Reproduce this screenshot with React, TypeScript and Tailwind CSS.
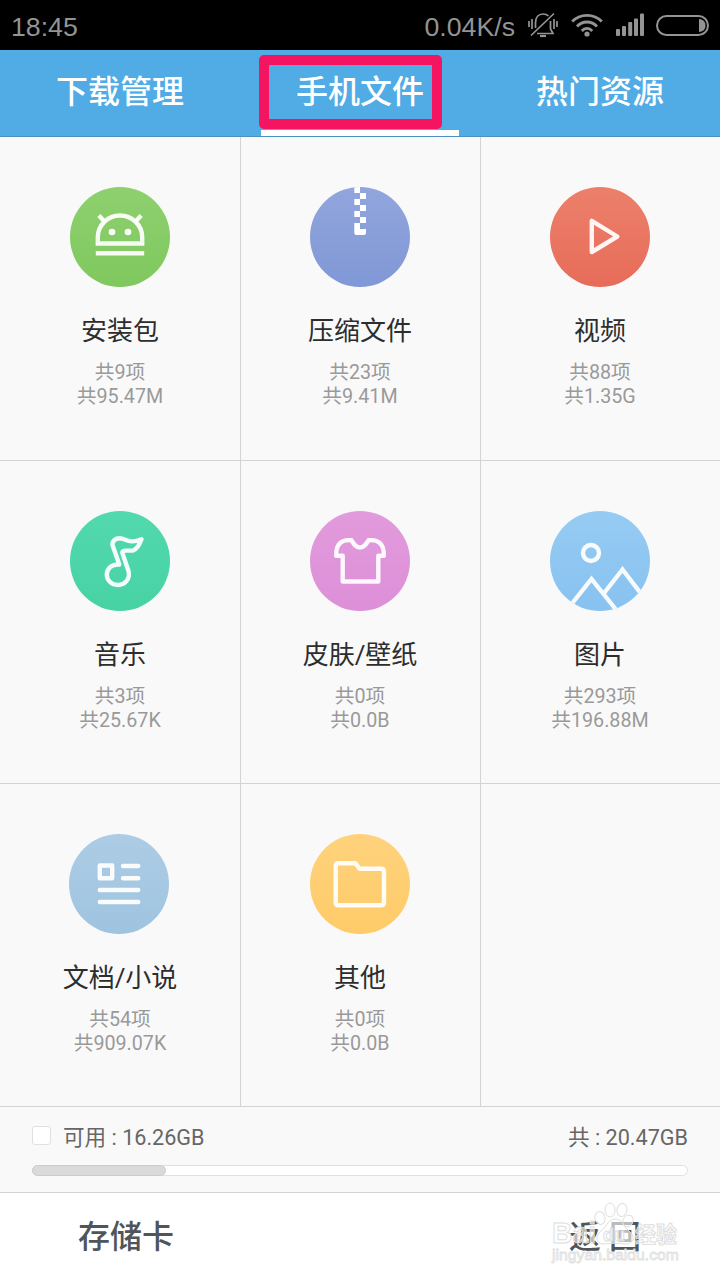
import type { ReactNode } from "react";
import clsx from "clsx";

type Category = {
  name: string;
  count: string;
  size: string;
  color: string;
  icon: ReactNode;
};

const categories: Category[] = [
  {
    name: "安装包",
    count: "共9项",
    size: "共95.47M",
    color: "from-[#8ed06f] to-[#7fc85e]",
    icon: (
      <>
        <path d="M27.8 56.5V50A22.2 21.5 0 0 1 72.2 50V56.5Z" />
        <path d="M28.8 28.5L34.5 34.5M71.2 28.5L65.5 34.5M25.8 66.3H74.2" />
        <circle cx="42" cy="45" r="3.3" fill="white" stroke="none" />
        <circle cx="58" cy="45" r="3.3" fill="white" stroke="none" />
      </>
    ),
  },
  {
    name: "压缩文件",
    count: "共23项",
    size: "共9.41M",
    color: "from-[#92a5dd] to-[#8098d6]",
    icon: (
      <path
        d="M44.3 0H50V6H44.3ZM50 6H56V12H50ZM44.3 12H50V18H44.3ZM50 18H56V24H50ZM44.3 24H50V30H44.3ZM50 30H56V36H50ZM44.3 36H50V42H56V46Q56 48 54 48H46.3Q44.3 48 44.3 46Z"
        fill="white"
        stroke="none"
      />
    ),
  },
  {
    name: "视频",
    count: "共88项",
    size: "共1.35G",
    color: "from-[#ec806b] to-[#e76c59]",
    icon: <path d="M41.8 33.8V65L67.3 49.5Z" strokeLinejoin="round" />,
  },
  {
    name: "音乐",
    count: "共3项",
    size: "共25.67K",
    color: "from-[#52d9ae] to-[#47d2a4]",
    icon: (
      <path
        d="M49.3 53.5L42.3 33.5Q43 27.5 50 27.3C56 27.5 59 33.5 71.5 28.3Q68 37.5 63.5 39.3C58.5 40.5 52.5 38 52.3 41.8L58.5 60C60.5 68.5 54.5 74 48 74C41 74 36.8 69 36.8 63.5C36.8 57.5 42 53 49.3 53.5Z"
        strokeLinejoin="round"
      />
    ),
  },
  {
    name: "皮肤/壁纸",
    count: "共0项",
    size: "共0.0B",
    color: "from-[#e29bdc] to-[#dd8fd8]",
    icon: (
      <path
        d="M41.5 29.3C44 33.5 46 36.5 50 36.5C54 36.5 56 33.5 58.5 29.3C68 28 74.5 33 73.8 44.8H68.3V70.5H32.7V44.8H26.2C25.5 33 32 28 41.5 29.3Z"
        strokeLinejoin="round"
      />
    ),
  },
  {
    name: "图片",
    count: "共293项",
    size: "共196.88M",
    color: "from-[#96cbf3] to-[#88c2f0]",
    icon: (
      <>
        <circle cx="41" cy="42" r="8" />
        <path d="M22 92.5L41.5 68L65.5 98M54.5 81.5L72.5 58.5L90.5 82" />
      </>
    ),
  },
  {
    name: "文档/小说",
    count: "共54项",
    size: "共909.07K",
    color: "from-[#adcce5] to-[#9fc4e0]",
    icon: (
      <>
        <path d="M30.8 31.5H43.2V44.2H30.8Z" strokeLinejoin="round" />
        <path
          d="M54 32H69.3M54 44.2H69.3M30.8 56H69.3M30.8 68H69.3"
          strokeLinecap="round"
        />
      </>
    ),
  },
  {
    name: "其他",
    count: "共0项",
    size: "共0.0B",
    color: "from-[#ffd27c] to-[#fecb69]",
    icon: (
      <path
        d="M28.5 29.3H45.5L49.5 34.8H71Q74 34.8 74 37.8V68.3Q74 71.3 71 71.3H28.5Q25.7 71.3 25.7 68.3V32.3Q25.7 29.3 28.5 29.3Z"
        strokeLinejoin="round"
      />
    ),
  },
];

const tabs = ["下载管理", "手机文件", "热门资源"];

function StatusBar() {
  return (
    <div className="flex h-[50px] items-center bg-black pr-[11px] pl-[11px] font-['Liberation_Sans',sans-serif] text-[26.7px] text-[#949494]">
      <span className="mt-[4px]">18:45</span>
      <span className="mt-[4px] ml-auto">0.04K/s</span>
      {/* Rung tắt: chuông có gạch chéo */}
      <svg className="ml-[13px] h-[26px] w-[30px]" viewBox="0 0 30 26" fill="none" stroke="currentColor" strokeWidth="1.7">
        <path d="M3 23.5L26 1.5M1 9V15M4 7V17M26 7V17M29 9V15" />
        <path d="M7.5 16V11C7.5 5 10.5 2 15 2Q18.5 2 20.5 4M22.5 9V17L25 21.5H9" />
        <path d="M12 24H18" strokeWidth="2.2" />
      </svg>
      <svg className="mt-[-1px] ml-[13px] h-[24px] w-[32px]" viewBox="0 0 32 24" fill="none" stroke="currentColor" strokeWidth="2.8">
        <path d="M1.2 8.5C9 .2 23 .2 30.8 8.5M6 13.5C11.5 7.5 20.5 7.5 26 13.5M10.8 18C13.7 14.5 18.3 14.5 21.2 18" />
        <circle cx="16" cy="21" r="2.6" fill="currentColor" stroke="none" />
      </svg>
      <svg className="mt-[-1px] ml-[13px] h-[23px] w-[28px]" viewBox="0 0 28 23" fill="currentColor">
        <rect x="0" y="16" width="4" height="7" rx="1" />
        <rect x="6" y="13" width="4" height="10" rx="1" />
        <rect x="12.2" y="9" width="4" height="14" rx="1" />
        <rect x="18" y="5.5" width="4" height="17.5" rx="1" />
        <rect x="24" y="0.5" width="4" height="22.5" rx="1" />
      </svg>
      <svg className="ml-[12px] h-[21px] w-[53px]" viewBox="0 0 53 21" fill="none" stroke="currentColor">
        <rect x="1" y="1" width="51" height="19" rx="9.5" strokeWidth="2" />
        <path d="M43 4C47.5 4.5 49.5 7 49.5 10.5S47.5 16.5 43 17Z" fill="currentColor" stroke="none" />
      </svg>
    </div>
  );
}

function TabBar() {
  return (
    <div className="relative grid h-[87px] grid-cols-3 border-b border-[#4a92c4] bg-[#51abe5] text-center text-[32px] leading-[84px] font-medium text-white">
      {tabs.map((tab) => (
        <span key={tab}>{tab}</span>
      ))}
      <div className="absolute bottom-0 left-[261px] h-[6px] w-[198px] bg-white" />
      <div className="absolute top-[5px] left-[259px] h-[74px] w-[183px] rounded-[5px] border-[10px] border-[#f5145f]" />
    </div>
  );
}

function CategoryCell({ category, index }: { category?: Category; index: number }) {
  return (
    <div
      className={clsx(
        "flex flex-col items-center border-b border-[#d3d3d3] pt-[50px]",
        index % 3 !== 0 && "border-l pr-px"
      )}
    >
      {category && (
        <>
          <div
            className={clsx(
              "size-[100px] overflow-hidden rounded-full bg-linear-to-b",
              category.color,
              index === 6 && "mr-[2px]"
            )}
          >
            <svg viewBox="0 0 100 100" fill="none" stroke="white" strokeOpacity="0.93" strokeWidth="4.4">
              {category.icon}
            </svg>
          </div>
          <div className="mt-[26px] text-[26px] leading-[36px] text-[#2d2d2d]">{category.name}</div>
          <div className="mt-[12px] text-center text-[19.7px] leading-[24px] text-[#999]">
            <div>{category.count}</div>
            <div>{category.size}</div>
          </div>
        </>
      )}
    </div>
  );
}

function Watermark() {
  return (
    <svg
      className="absolute top-[8px] right-[40px] h-[66px] w-[132px] font-['Liberation_Sans','Noto_Sans_CJK_SC',sans-serif]"
      viewBox="0 0 132 66"
      fill="white"
      fillOpacity="0.6"
      stroke="#dedede"
      strokeWidth="1"
    >
      <text x="4" y="42" fontSize="30" fontWeight="bold" textLength="44" lengthAdjust="spacingAndGlyphs">Bai</text>
      <ellipse cx="52" cy="17" rx="5" ry="6.5" transform="rotate(-15 52 17)" />
      <ellipse cx="62" cy="9" rx="5" ry="7" />
      <ellipse cx="74" cy="9" rx="5" ry="6.5" transform="rotate(10 74 9)" />
      <ellipse cx="80" cy="20" rx="5" ry="6" transform="rotate(25 80 20)" />
      <path d="M67 18C60 18 58 27 52 31C46 36 49 44 57 43C63 42 71 42 76 43C85 44 88 36 82 31C76 27 75 18 67 18Z" />
      <text x="55" y="40" fontSize="18" fontWeight="bold">du</text>
      <text x="87" y="41" fontSize="22" fontWeight="bold" textLength="42" lengthAdjust="spacingAndGlyphs">经验</text>
      <text x="4" y="59" fontSize="15" strokeWidth="0.8" textLength="127" lengthAdjust="spacingAndGlyphs">jingyan.baidu.com</text>
    </svg>
  );
}

export default function App() {
  return (
    <div className="flex h-[1280px] w-[720px] flex-col overflow-hidden bg-[#f9f9f9] font-['Roboto','Noto_Sans_CJK_SC',sans-serif]">
      <StatusBar />
      <TabBar />

      <div className="grid grid-cols-3 grid-rows-[324px_323px_323px]">
        {Array.from({ length: 9 }, (_, i) => (
          <CategoryCell key={i} category={categories[i]} index={i} />
        ))}
      </div>

      {/* Dung lượng bộ nhớ */}
      <div className="h-[86px] border-b border-[#d3d3d3] px-[32px] pt-[16px] text-[21.6px] leading-[30px] text-[#666]">
        <div className="flex items-center">
          <span className="mt-[-5px] size-[19px] rounded-[3px] border border-[#e0e0e0] bg-white" />
          <span className="ml-[12px]">可用 : 16.26GB</span>
          <span className="ml-auto">共 : 20.47GB</span>
        </div>
        <div className="mt-[12px] h-[11px] rounded-full border border-[#e0e0e0] bg-white">
          <div className="mt-[-1px] ml-[-1px] h-[11px] w-[134px] rounded-full border border-[#cdcdcd] bg-[#dadada]" />
        </div>
      </div>

      <div className="relative flex flex-1 items-center justify-between bg-white pr-[79px] pl-[78px] text-[32px] font-medium text-[#50555a]">
        <span>存储卡</span>
        <span>返 回</span>
        <Watermark />
      </div>
    </div>
  );
}
